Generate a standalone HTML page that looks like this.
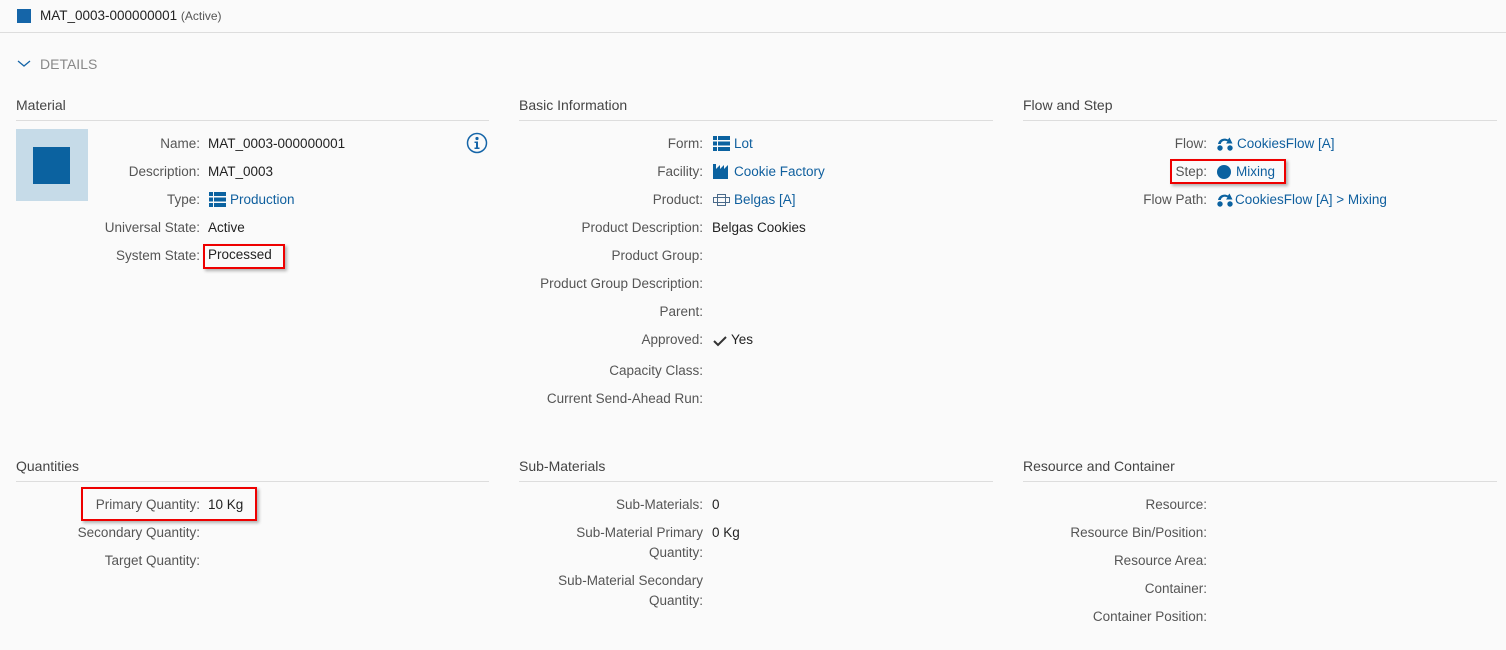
<!DOCTYPE html>
<html><head><meta charset="utf-8">
<style>
*{margin:0;padding:0;box-sizing:border-box}
body{width:1506px;height:650px;background:#fafafa;font-family:"Liberation Sans",sans-serif;font-size:13.5px;color:#222;position:relative;overflow:hidden}
.a{position:absolute;white-space:nowrap;line-height:18px}
.l{color:#555;text-align:right}
.v{color:#222}
.lk{color:#0f5f9e}
.h{position:absolute;font-size:14px;color:#444;line-height:18px}
.hr{position:absolute;height:1px;background:#ddd}
.box{position:absolute;border:2px solid #e00;box-shadow:2px 2px 3px rgba(0,0,0,.3)}
svg{vertical-align:-3px;margin-right:4px}
</style></head><body>
<div style="position:absolute;left:0;top:0;width:1506px;height:33px;background:#fafafa;border-bottom:1px solid #ddd"></div>
<div style="position:absolute;left:17px;top:9px;width:14px;height:14px;background:#1565a8"></div>
<div class="a" style="left:40px;top:7px;color:#222">MAT_0003-000000001 <span style="font-size:12px;color:#555">(Active)</span></div>
<svg style="position:absolute;left:17px;top:59px" width="14" height="10" viewBox="0 0 14 10"><path d="M1 2 L7 7 L13 2" fill="none" stroke="#1565a8" stroke-width="1.3"/></svg>
<div class="a" style="left:40px;top:55px;color:#888;font-size:14px">DETAILS</div>

<div class="h" style="left:16px;top:96px">Material</div><div class="hr" style="left:16px;top:120px;width:473px"></div>
<div class="h" style="left:519px;top:96px">Basic Information</div><div class="hr" style="left:519px;top:120px;width:474px"></div>
<div class="h" style="left:1023px;top:96px">Flow and Step</div><div class="hr" style="left:1023px;top:120px;width:474px"></div>
<div class="h" style="left:16px;top:457px">Quantities</div><div class="hr" style="left:16px;top:481px;width:473px"></div>
<div class="h" style="left:519px;top:457px">Sub-Materials</div><div class="hr" style="left:519px;top:481px;width:474px"></div>
<div class="h" style="left:1023px;top:457px">Resource and Container</div><div class="hr" style="left:1023px;top:481px;width:474px"></div>

<div style="position:absolute;left:16px;top:129px;width:72px;height:72px;background:#c6dbe8"></div>
<div style="position:absolute;left:33px;top:147px;width:37px;height:37px;background:#0b62a0"></div>
<svg style="position:absolute;left:466px;top:132px;margin:0" width="22" height="22" viewBox="0 0 22 22"><circle cx="11" cy="11" r="9.5" fill="none" stroke="#1565a8" stroke-width="1.5"/><circle cx="11" cy="6.5" r="1.6" fill="#1565a8"/><path d="M8.5 9.5h3.5v6h1.5v1.5h-5v-1.5h1.5v-4.5h-1.5z" fill="#1565a8"/></svg>

<!-- col1 -->
<div class="a l" style="right:1306px;top:135px">Name:</div><div class="a v" style="left:208px;top:135px">MAT_0003-000000001</div>
<div class="a l" style="right:1306px;top:163px">Description:</div><div class="a v" style="left:208px;top:163px">MAT_0003</div>
<div class="a l" style="right:1306px;top:191px">Type:</div><div class="a lk" style="left:209px;top:191px"><svg width="17" height="15" viewBox="0 0 17 15"><g fill="#0b62a0"><rect x="0" y="0" width="4" height="4"/><rect x="5" y="0" width="12" height="4"/><rect x="0" y="5.5" width="4" height="4"/><rect x="5" y="5.5" width="12" height="4"/><rect x="0" y="11" width="4" height="4"/><rect x="5" y="11" width="12" height="4"/></g></svg>Production</div>
<div class="a l" style="right:1306px;top:219px">Universal State:</div><div class="a v" style="left:208px;top:219px">Active</div>
<div class="a l" style="right:1306px;top:247px">System State:</div><div class="a v" style="left:208px;top:246px">Processed</div>
<div class="box" style="left:203px;top:244px;width:82px;height:25px"></div>

<!-- col2 -->
<div class="a l" style="right:803px;top:135px">Form:</div><div class="a lk" style="left:713px;top:135px"><svg width="17" height="15" viewBox="0 0 17 15"><g fill="#0b62a0"><rect x="0" y="0" width="4" height="4"/><rect x="5" y="0" width="12" height="4"/><rect x="0" y="5.5" width="4" height="4"/><rect x="5" y="5.5" width="12" height="4"/><rect x="0" y="11" width="4" height="4"/><rect x="5" y="11" width="12" height="4"/></g></svg>Lot</div>
<div class="a l" style="right:803px;top:163px">Facility:</div><div class="a lk" style="left:713px;top:163px"><svg width="17" height="15" viewBox="0 0 17 15"><path d="M0 15V0h3v5l4-4v4l4-4v4l4-4v14z" fill="#0b62a0"/></svg>Cookie Factory</div>
<div class="a l" style="right:803px;top:191px">Product:</div><div class="a lk" style="left:713px;top:191px"><svg width="17" height="14" viewBox="0 0 17 14"><g fill="none" stroke="#4a6a8a" stroke-width="1"><rect x="4.5" y="1.5" width="8" height="11"/><rect x="0.5" y="4.5" width="16" height="5"/></g></svg>Belgas [A]</div>
<div class="a l" style="right:803px;top:219px">Product Description:</div><div class="a v" style="left:712px;top:219px">Belgas Cookies</div>
<div class="a l" style="right:803px;top:247px">Product Group:</div>
<div class="a l" style="right:803px;top:275px">Product Group Description:</div>
<div class="a l" style="right:803px;top:303px">Parent:</div>
<div class="a l" style="right:803px;top:331px">Approved:</div><div class="a v" style="left:713px;top:331px"><svg width="14" height="12" viewBox="0 0 14 12"><path d="M1 6l4 4 8-8" fill="none" stroke="#333" stroke-width="2"/></svg>Yes</div>
<div class="a l" style="right:803px;top:362px">Capacity Class:</div>
<div class="a l" style="right:803px;top:390px">Current Send-Ahead Run:</div>

<!-- col3 -->
<div class="a l" style="right:299px;top:135px">Flow:</div><div class="a lk" style="left:1217px;top:135px"><svg width="16" height="15" viewBox="0 0 16 15"><g fill="#0b62a0"><circle cx="3" cy="12" r="2.7"/><circle cx="13" cy="12" r="2.7"/><path d="M1 8C2 3 7 1.5 11 3.5L12.5 1.5 15.5 7.5 9 7.5 10.5 5.5C7.5 4 4.5 5 3.8 8z"/></g></svg>CookiesFlow [A]</div>
<div class="a l" style="right:299px;top:163px">Step:</div><div class="a lk" style="left:1217px;top:163px"><svg width="15" height="14" viewBox="0 0 15 14"><circle cx="7" cy="7" r="7" fill="#0b62a0"/></svg>Mixing</div>
<div class="box" style="left:1170px;top:159px;width:116px;height:25px"></div>
<div class="a l" style="right:299px;top:191px">Flow Path:</div><div class="a lk" style="left:1217px;top:191px"><svg width="16" height="15" viewBox="0 0 16 15" style="margin-right:2px"><g fill="#0b62a0"><circle cx="3" cy="12" r="2.7"/><circle cx="13" cy="12" r="2.7"/><path d="M1 8C2 3 7 1.5 11 3.5L12.5 1.5 15.5 7.5 9 7.5 10.5 5.5C7.5 4 4.5 5 3.8 8z"/></g></svg>CookiesFlow [A] &gt; Mixing</div>

<!-- quantities -->
<div class="a l" style="right:1306px;top:496px">Primary Quantity:</div><div class="a v" style="left:208px;top:496px">10 Kg</div>
<div class="box" style="left:81px;top:487px;width:176px;height:34px"></div>
<div class="a l" style="right:1306px;top:524px">Secondary Quantity:</div>
<div class="a l" style="right:1306px;top:552px">Target Quantity:</div>

<!-- sub materials -->
<div class="a l" style="right:803px;top:496px">Sub-Materials:</div><div class="a v" style="left:712px;top:496px">0</div>
<div class="a l" style="right:803px;top:523px;line-height:20px">Sub-Material Primary<br>Quantity:</div><div class="a v" style="left:712px;top:524px">0 Kg</div>
<div class="a l" style="right:803px;top:571px;line-height:20px">Sub-Material Secondary<br>Quantity:</div>

<!-- resource -->
<div class="a l" style="right:299px;top:496px">Resource:</div>
<div class="a l" style="right:299px;top:524px">Resource Bin/Position:</div>
<div class="a l" style="right:299px;top:552px">Resource Area:</div>
<div class="a l" style="right:299px;top:580px">Container:</div>
<div class="a l" style="right:299px;top:608px">Container Position:</div>
</body></html>
